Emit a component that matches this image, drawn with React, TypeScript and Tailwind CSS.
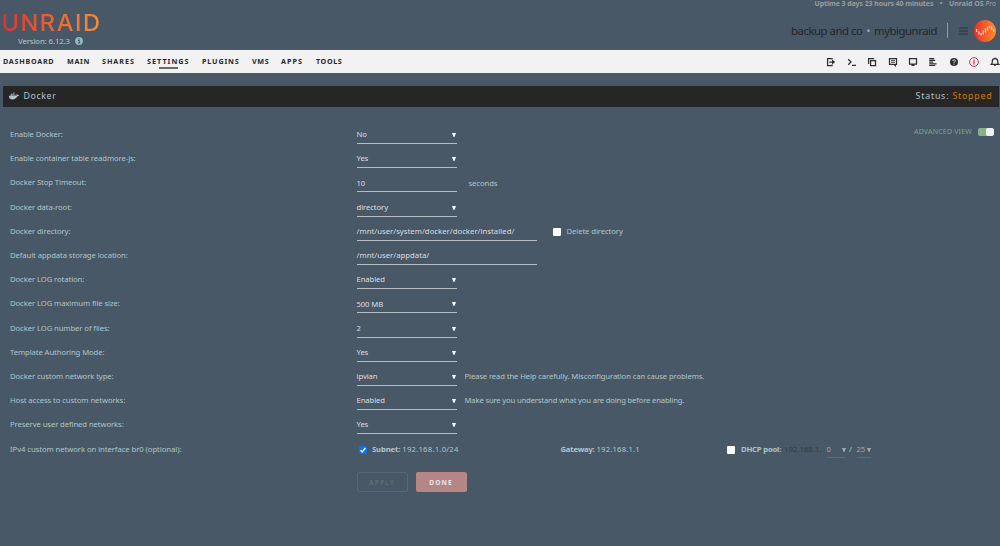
import { clsx } from "clsx";
import type { ReactNode } from "react";
import { FaDocker } from "react-icons/fa";

const navItems = [
  { label: "DASHBOARD", width: "w-[64px] tracking-[0.72px]" },
  { label: "MAIN", width: "w-[35px] tracking-[0.65px]" },
  { label: "SHARES", width: "w-[45px] tracking-[0.95px]" },
  { label: "SETTINGS", width: "w-[55px] tracking-[1.05px]", active: true },
  { label: "PLUGINS", width: "w-[50px] tracking-[0.85px]" },
  { label: "VMS", width: "w-[29px] tracking-[0.6px]" },
  { label: "APPS", width: "w-[35px] tracking-[1px]" },
  { label: "TOOLS", width: "w-[30px] tracking-[0.6px]" },
];

interface Setting {
  label: string;
  value: string;
  kind?: "select" | "input" | "path";
  extra?: ReactNode;
}

const settings: Setting[] = [
  { label: "Enable Docker:", value: "No" },
  { label: "Enable container table readmore-js:", value: "Yes" },
  {
    label: "Docker Stop Timeout:",
    value: "10",
    kind: "input",
    extra: <span className="ml-[12px]">seconds</span>,
  },
  { label: "Docker data-root:", value: "directory" },
  {
    label: "Docker directory:",
    value: "/mnt/user/system/docker/docker/installed/",
    kind: "path",
    extra: (
      <span className="ml-[16px] flex items-center gap-[6px]">
        <Checkbox />
        Delete directory
      </span>
    ),
  },
  {
    label: "Default appdata storage location:",
    value: "/mnt/user/appdata/",
    kind: "path",
  },
  { label: "Docker LOG rotation:", value: "Enabled" },
  { label: "Docker LOG maximum file size:", value: "500 MB" },
  { label: "Docker LOG number of files:", value: "2" },
  { label: "Template Authoring Mode:", value: "Yes" },
  {
    label: "Docker custom network type:",
    value: "ipvlan",
    extra: (
      <span className="ml-[8px] tracking-[-0.12px]">
        Please read the Help carefully. Misconfiguration can cause problems.
      </span>
    ),
  },
  {
    label: "Host access to custom networks:",
    value: "Enabled",
    extra: (
      <span className="ml-[8px] tracking-[-0.17px]">
        Make sure you understand what you are doing before enabling.
      </span>
    ),
  },
  { label: "Preserve user defined networks:", value: "Yes" },
];

function Checkbox({ checked }: { checked?: boolean }) {
  return (
    <span
      className={clsx(
        "flex size-[8px] shrink-0 items-center justify-center rounded-[1px]",
        checked ? "bg-[#0a74f0]" : "bg-white"
      )}
    >
      {checked && (
        <svg viewBox="0 0 8 8" className="size-[8px]" fill="none">
          <path d="M1.6 4.2 3.2 5.9 6.4 2" stroke="#fff" strokeWidth="1.4" />
        </svg>
      )}
    </span>
  );
}

function Caret({ className }: { className?: string }) {
  return (
    <svg viewBox="0 0 4 4" className={clsx("size-[4px] shrink-0", className)}>
      <path d="M0 0h4L2.4 4h-.8z" fill="currentColor" />
    </svg>
  );
}

function SettingRow({ label, value, kind = "select", extra }: Setting) {
  return (
    <div className="flex h-[24.2px] items-start">
      <div className="w-[346.5px] shrink-0 leading-[19px]">{label}</div>
      <div
        className={clsx(
          "flex h-[19px] shrink-0 items-center justify-between border-b border-[#b4bbc1] pt-[2px] text-[#dcdfe1]",
          kind === "path" ? "w-[180px] tracking-[0.04px]" : "w-[100px] pr-[1px]"
        )}
      >
        <span>{value}</span>
        {kind === "select" && <Caret className="text-white" />}
      </div>
      <div className="flex h-[20px] items-center">{extra}</div>
    </div>
  );
}

function ToolIcon({ children, className }: { children: ReactNode; className?: string }) {
  return (
    <svg
      viewBox="0 0 10 10"
      className={clsx("size-[10px] overflow-visible", className ?? "text-[#2d2f31]")}
      fill="none"
      stroke="currentColor"
      strokeWidth="1.25"
    >
      {children}
    </svg>
  );
}

function Toolbar() {
  return (
    <div className="flex items-center gap-[10.4px] pr-[0.5px]">
      <ToolIcon>
        <path d="M6 2.6V1.5H1.6v7H6V7.4M3.2 5H7" />
        <path d="M6 2.6 9.2 5 6 7.4z" fill="currentColor" stroke="none" />
      </ToolIcon>
      <ToolIcon>
        <path d="M1.2 2.2 4 5 1.2 7.8M5 8.4h4" />
      </ToolIcon>
      <ToolIcon>
        <path d="M3.6 3.6h4.9v4.9H3.6zM1.6 6.9V1.6h5.6" />
      </ToolIcon>
      <ToolIcon>
        <path d="M1.5 1.7h7v5.6H7.3v1.3L5.8 7.3H1.5z" />
        <path d="M3 3.6h4M3 5.3h4" strokeWidth="0.9" />
      </ToolIcon>
      <ToolIcon>
        <path d="M1.5 1.7h7v5.3h-7z" />
        <path d="M3.5 7h3v2h-3z" fill="currentColor" stroke="none" />
      </ToolIcon>
      <ToolIcon>
        <path d="M1.2 1.6h5M1.2 3.4h6M1.2 5.1h4M1.2 6.8h7.3M1.2 8.5h6" strokeWidth="1.2" />
      </ToolIcon>
      <ToolIcon>
        <circle cx="5" cy="5" r="4" fill="currentColor" stroke="none" />
        <path
          d="M3.7 4c0-1.7 2.7-1.6 2.7-.2C6.4 4.8 5 4.7 5 5.8M5 6.6v1"
          stroke="#f2f2f2"
          strokeWidth="0.9"
        />
      </ToolIcon>
      <ToolIcon className="text-[#e22c53]">
        <circle cx="5" cy="5" r="4.4" strokeWidth="1" />
        <path d="M5 2.6v4.8" />
      </ToolIcon>
      <ToolIcon>
        <path d="M1.4 7.3c1-1 .9-1.8.9-3C2.3 2.6 3.4 1.6 5 1.6s2.7 1 2.7 2.7c0 1.2-.1 2 .9 3z" />
        <path d="M3.9 8h2.2L5 9.5zM4.5.6h1v1h-1z" fill="currentColor" stroke="none" />
      </ToolIcon>
    </div>
  );
}

function Header() {
  return (
    <header className="flex h-[50px] justify-between">
      <div className="pl-[1.5px] pt-[10px]">
        <div className="w-[103px] bg-linear-to-r from-[#e22c2f] to-[#ff8d30] bg-clip-text font-['Inter',sans-serif] text-[23.5px] leading-[26px] font-medium tracking-[1.6px] text-transparent">
          UNRAID
        </div>
        <div className="flex items-center gap-[5px] pl-[16.5px] text-[7.7px] leading-[10px] tracking-[-0.06px] text-[#b9c8cd]">
          Version: 6.12.3
          <svg viewBox="0 0 8 8" className="size-[8px]">
            <circle cx="4" cy="4" r="3.9" fill="#8fbcc0" />
            <path
              d="M3 3.5h1.4v2.5M2.8 6h2.6M3.5 2h1.2"
              stroke="#485866"
              strokeWidth="1"
              fill="none"
            />
          </svg>
        </div>
      </div>
      <div className="flex flex-col items-end">
        <div className="h-[8px] pr-[4px] text-[7px] leading-[7px] font-bold tracking-[-0.02px] whitespace-pre text-[#9b9c9e]">
          <span className="tracking-[-0.09px]">Uptime 3 days 23 hours 40 minutes</span>
          <span className="mx-[6.5px]">•</span>
          Unraid OS <i className="font-medium">Pro</i>
        </div>
        <div className="flex h-[42px] items-center pt-[3px] pr-[4px] text-[11.4px] text-[#23272b]">
          <span className="tracking-[-0.49px] whitespace-pre">
            backup and co <span className="mx-[1.5px] text-[#9da5ac]">•</span> mybigunraid
          </span>
          <span className="ml-[9.5px] h-[15px] w-px bg-[#929ba2]" />
          <svg viewBox="0 0 9 8" className="ml-[11.5px] h-[8px] w-[9px]">
            <path d="M0 1h9M0 4h9M0 7h9" stroke="#2b3036" strokeWidth="1" />
          </svg>
          <svg viewBox="0 0 22 22" className="ml-[6px] size-[22px]">
            <defs>
              <linearGradient id="avatar">
                <stop offset="0" stopColor="#e5302d" />
                <stop offset="1" stopColor="#ff8b2c" />
              </linearGradient>
            </defs>
            <circle cx="11" cy="11" r="11" fill="url(#avatar)" />
            <path
              d="M2.7 9v3M4.9 11.5v3M7.1 13v2.5M9.2 10.5v4M11.4 8.5v4M13.5 6.5v4M15.6 5.8v2.5M17.7 6.5v3.5M19.6 9v3"
              stroke="#ffe4d8"
              strokeWidth="1.1"
            />
          </svg>
        </div>
      </div>
    </header>
  );
}

function NavBar() {
  return (
    <nav className="flex h-[23px] items-center justify-between bg-[#f2f2f2] pl-[3px]">
      <div className="flex">
        {navItems.map((item) => (
          <div
            key={item.label}
            className={clsx(
              "relative shrink-0 text-[7.2px] leading-[23px] font-bold text-[#26282a]",
              item.width
            )}
          >
            {item.label}
            {item.active && (
              <span className="absolute top-[17px] left-[12px] h-[2px] w-[19px] bg-[#6a6a6a]" />
            )}
          </div>
        ))}
      </div>
      <Toolbar />
    </nav>
  );
}

function NetworkRow() {
  return (
    <div className="flex h-[24px] items-start pt-[1px] leading-[19px]">
      <div className="w-[349px] shrink-0 tracking-[-0.06px]">
        IPv4 custom network on interface br0 (optional):
      </div>
      <div className="flex w-[201.5px] shrink-0 items-center gap-[5px]">
        <Checkbox checked />
        <span>
          <b className="tracking-[-0.12px]">Subnet:</b>{" "}
          <span className="tracking-[0.24px]">192.168.1.0/24</span>
        </span>
      </div>
      <div className="w-[166.5px] shrink-0">
        <b className="tracking-[-0.2px]">Gateway:</b>{" "}
        <span className="tracking-[0.18px]">192.168.1.1</span>
      </div>
      <div className="flex items-center gap-[6px]">
        <Checkbox />
        <b className="w-[40px] tracking-[-0.2px] whitespace-nowrap">DHCP pool:</b>
      </div>
      <span className="ml-[3px] w-[42.5px] tracking-[0.05px] text-[#353d45]">192.168.1.</span>
      <div className="flex h-[18px] w-[19.5px] items-center justify-between border-b border-[#5c6c79] pt-[2px] text-[#a0a9af]">
        0<Caret />
      </div>
      <span className="ml-[3px] w-[7.5px]">/</span>
      <div className="flex h-[18px] w-[14.5px] items-center justify-between border-b border-[#5c6c79] pt-[2px] text-[#a0a9af]">
        25
        <Caret />
      </div>
    </div>
  );
}

export default function App() {
  return (
    <div className="h-[546px] w-[1000px] overflow-hidden bg-[#485866] font-['Noto_Sans',sans-serif] text-[7.7px] tracking-[-0.09px] text-[#b0c5ca]">
      <Header />
      <NavBar />
      <main className="pt-[13px]">
        <div className="ml-[3px] flex h-[21px] w-[996px] items-center justify-between bg-[#262626] pt-[1px] pr-[6.5px] pl-[6px] text-[8.8px] tracking-[0.6px]">
          <div className="flex items-center gap-[4.5px]">
            <FaDocker className="mb-[2px] size-[10px]" />
            Docker
          </div>
          <div className="tracking-[0.8px]">
            Status: <span className="text-[#cf7a0a]">Stopped</span>
          </div>
        </div>
        <div className="flex justify-between pt-[18px] pr-[6px] pl-[10px]">
          <div className="shrink-0">
            {settings.map((setting) => (
              <SettingRow key={setting.label} {...setting} />
            ))}
            <NetworkRow />
            <div className="mt-[9px] flex gap-[8px] pl-[346.5px] text-[6.6px] leading-[17px] font-bold tracking-[1.1px]">
              <button className="h-[20px] w-[51px] rounded-[2px] border border-[#5c666e] text-[#5e6a74]">
                APPLY
              </button>
              <button className="h-[20px] w-[51px] rounded-[2px] bg-[#b48685] text-[#eee3e3]">
                DONE
              </button>
            </div>
          </div>
          <div className="-ml-[100px] flex h-[14px] items-center gap-[6px] text-[7px] tracking-[0.2px] text-[#7fa785]">
            ADVANCED VIEW
            <span className="flex h-[8px] w-[16px] justify-end overflow-hidden rounded-[2px] bg-[#88b188]">
              <span className="h-full w-[8px] rounded-[2px] bg-[#f2f2f2]" />
            </span>
          </div>
        </div>
      </main>
    </div>
  );
}
